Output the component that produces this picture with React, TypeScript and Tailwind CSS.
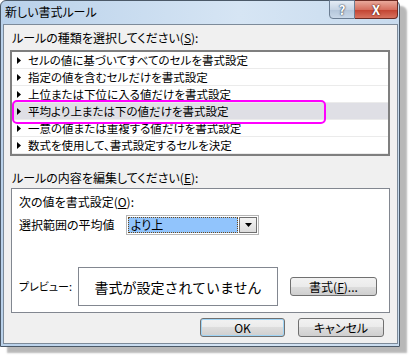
import React from 'react';

const rules = [
  'セルの値に基づいてすべてのセルを書式設定',
  '指定の値を含むセルだけを書式設定',
  '上位または下位に入る値だけを書式設定',
  '平均より上または下の値だけを書式設定',
  '一意の値または重複する値だけを書式設定',
  '数式を使用して、書式設定するセルを決定',
];

const Arrow = () => (
  <svg width="4" height="7" viewBox="0 0 4 7" className="shrink-0">
    <path d="M0 0 L4 3.5 L0 7 Z" fill="#000" />
  </svg>
);

const btn =
  'flex items-center justify-center rounded-[3px] border border-[#707070] bg-[linear-gradient(#f2f2f2_0%,#ebebeb_50%,#dddddd_50%,#cfcfcf_100%)] text-[12px] leading-none';

export default function App() {
  return (
    <div className="w-[410px] h-[356px] bg-white text-black text-[12px] leading-none font-['Noto_Sans_CJK_JP',sans-serif] [font-feature-settings:'palt']">
      <div className="w-[400px] h-[347px] flex flex-col rounded-t-[6px] border border-[#4b5968] bg-[linear-gradient(90deg,#b9d1ea,#d6e5f4_60%,#c8dbee)] shadow-[7px_6px_2px_rgba(0,0,0,0.28)]">
        {/* title bar */}
        <div className="h-[23px] flex items-start justify-between">
          <div className="pl-[4px] pt-[5px] text-[12px] text-black">新しい書式ルール</div>
          <div className="flex -mt-px mr-[1px]">
            <div className="w-[26px] h-[19px] flex items-center justify-center rounded-bl-[4px] border border-[#6b7d92] bg-[linear-gradient(#e4ecf5,#c6d4e4_50%,#b3c5d9_51%,#c9d8e8)] text-white font-bold text-[13px] [text-shadow:0_0_2px_#2d3e52,0_0_1px_#2d3e52]">
              ?
            </div>
            <div className="w-[43px] h-[19px] flex items-center justify-center rounded-br-[4px] border border-l-0 border-[#6b2a22] bg-[linear-gradient(#e9a99b,#d5705f_50%,#c2412f_51%,#d7735f)] text-white font-bold text-[13px] [text-shadow:0_0_2px_#5a1a12,0_0_1px_#5a1a12]">
              X
            </div>
          </div>
        </div>

        {/* client area */}
        <div className="flex-1 ml-[2px] mr-[1px] mb-[2px] border border-[#7d8b9a] bg-[#f0f0f0] flex flex-col">
          <div className="mt-[5px] pl-[8px] h-[16px] flex items-center">
            ルールの種類を選択してください(<span className="underline">S</span>):
          </div>

          <div className="relative mt-[4px] ml-[6px] w-[380px] h-[106px] border-2 border-[#7f7f7f] bg-white">
            {rules.map((r, i) => (
              <div
                key={r}
                className={`h-[17px] flex items-center gap-[7px] pl-[5px] border-b border-[#ebebeb] text-[11.5px] ${
                  i === 3 ? 'bg-[#dfdfe5]' : ''
                }`}
              >
                <Arrow />
                <span className="whitespace-nowrap pt-[1px]">{r}</span>
              </div>
            ))}
            <div className="absolute left-0 top-[48px] w-[314px] h-[24px] rounded-[5px] border-2 border-[#ff00ff]" />
          </div>

          <div className="mt-[14px] pl-[8px] h-[16px] flex items-center">
            ルールの内容を編集してください(<span className="underline">E</span>):
          </div>

          <div className="mt-[2px] ml-[7px] w-[379px] h-[125px] border border-[#828790] bg-white flex flex-col">
            <div className="mt-[5px] pl-[7px] h-[16px] flex items-center">
              次の値を書式設定(<span className="underline">O</span>):
            </div>
            <div className="mt-[5px] pl-[7px] flex items-center">
              <div className="w-[107px]">選択範囲の平均値</div>
              <div className="w-[133px] h-[20px] border border-[#b5b5b5] p-[1px] flex">
                <div className="flex-1 bg-[#91c4fc] border border-dotted border-[#6b4a1e] flex items-center pl-[2px]">
                  より上
                </div>
                <div className="w-[18px] ml-[1px] border border-[#707070] bg-[linear-gradient(#f4f4f4,#dcdcdc)] flex items-center justify-center">
                  <svg width="7" height="4" viewBox="0 0 7 4">
                    <path d="M0 0 H7 L3.5 4 Z" fill="#000" />
                  </svg>
                </div>
              </div>
            </div>
            <div className="mt-[32px] pl-[7px] flex items-center">
              <div className="w-[59px] text-[11px]">プレビュー:</div>
              <div className="w-[200px] h-[39px] border border-[#828790] bg-white flex items-center justify-center text-[14px] [font-feature-settings:normal]">
                書式が設定されていません
              </div>
              <div className={`${btn} ml-[12px] w-[87px] h-[19px]`}>
                書式(<span className="underline">F</span>)...
              </div>
            </div>
          </div>

          <div className="mt-[5px] pl-[196px] flex gap-[13px]">
            <div className={`${btn} w-[85px] h-[19px] border-[#3c7fb1] shadow-[inset_0_0_0_1px_#9fd4f5]`}>OK</div>
            <div className={`${btn} w-[86px] h-[19px]`}>キャンセル</div>
          </div>
        </div>
      </div>
    </div>
  );
}
